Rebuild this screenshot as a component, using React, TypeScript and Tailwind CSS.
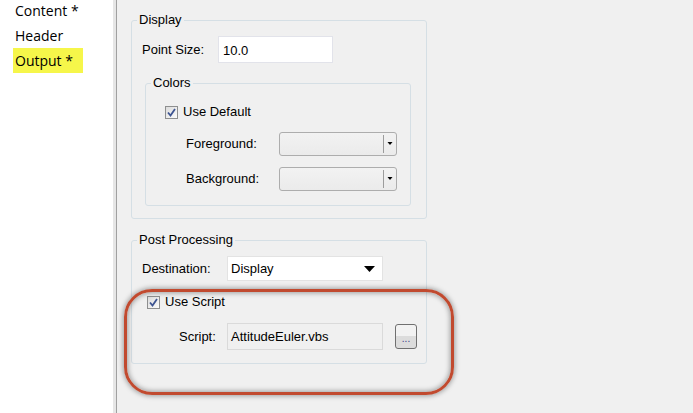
import React from 'react';

const font = { fontFamily: '"Liberation Sans", Arial, sans-serif' };

function Checkbox() {
  return (
    <span className="flex h-[13px] w-[13px] items-center justify-center border border-[#8e8f8f] bg-gradient-to-br from-[#dcdcdc] to-[#fbfbfb]">
      <svg width="9" height="9" viewBox="0 0 9 9">
        <path d="M1 4.5 L3.5 7.5 L8 1" fill="none" stroke="#3d5491" strokeWidth="1.8" />
      </svg>
    </span>
  );
}

function ColorSelect() {
  return (
    <div className="flex h-[24px] w-[118px] items-center justify-end rounded-[3px] border border-[#adadad] bg-gradient-to-b from-[#f2f2f2] to-[#ebebeb]">
      <span className="h-[18px] w-px bg-[#9c9c9c]" />
      <svg width="10" height="4" viewBox="0 0 10 4" className="mx-[1px]">
        <path d="M2.5 0 H7.5 L5 3 Z" fill="#000" />
      </svg>
    </div>
  );
}

function GroupBox({ title, className, children }: { title: string; className: string; children: React.ReactNode }) {
  return (
    <fieldset className={`rounded-[3px] border border-[#d5dfe5] ${className}`}>
      <legend className="ml-[5px] px-[2px] text-[13px] leading-[16px] text-black">{title}</legend>
      {children}
    </fieldset>
  );
}

export default function App() {
  return (
    <div className="relative flex h-[413px] w-[693px] overflow-hidden bg-[#f0f0f0] text-[13px] text-black" style={font}>
      <aside
        className="w-[116px] border-r-[3px] border-[#e6e6e6] bg-white text-[14px] leading-[25px]"
        style={{ fontFamily: '"Open Sans", "Noto Sans", sans-serif' }}
      >
        <div className="-mt-[2px] pl-[15px]">Content *</div>
        <div className="pl-[15px]">Header</div>
        <div className="ml-[13px] w-[70px] bg-[#f6f64a] pl-[2px]">Output *</div>
      </aside>

      <main className="flex-1 border-l border-[#a0a0a0] pl-[14px] pt-[12px]">
        <GroupBox title="Display" className="w-[296px] pb-[12px]">
          <div className="mt-[8px] flex items-center pl-[10px]">
            <span className="w-[76px]">Point Size:</span>
            <div className="flex h-[27px] w-[115px] items-start border border-[#e2e3ea] bg-white pl-[4px] pt-[4px]">10.0</div>
          </div>

          <GroupBox title="Colors" className="ml-[13px] mt-[12px] w-[266px] pb-[14px]">
            <div className="mt-[13px] flex h-[16px] items-center gap-[5px] pl-[19px]">
              <Checkbox />
              <span>Use Default</span>
            </div>
            <div className="mt-[12px] flex items-center pl-[40px]">
              <span className="w-[93px]">Foreground:</span>
              <ColorSelect />
            </div>
            <div className="mt-[11px] flex items-center pl-[40px]">
              <span className="w-[93px]">Background:</span>
              <ColorSelect />
            </div>
          </GroupBox>
        </GroupBox>

        <GroupBox title="Post Processing" className="mt-[13px] w-[296px] pb-[13px]">
          <div className="mt-[8px] flex items-center pl-[10px]">
            <span className="w-[85px]">Destination:</span>
            <div className="flex h-[25px] w-[156px] items-center justify-between border border-[#e3e3e3] bg-white pl-[3px] pr-[7px]">
              <span>Display</span>
              <svg width="11" height="6" viewBox="0 0 11 6">
                <path d="M0 0 H11 L5.5 6 Z" fill="#000" />
              </svg>
            </div>
          </div>
          <div className="mt-[13px] flex h-[16px] items-center gap-[5px] pl-[15px]">
            <Checkbox />
            <span>Use Script</span>
          </div>
          <div className="mt-[13px] flex items-center pl-[47px]">
            <span className="w-[48px]">Script:</span>
            <div className="flex h-[27px] w-[156px] items-start border border-[#dadada] bg-[#f0f0f0] pl-[3px] pt-[3px]">AttitudeEuler.vbs</div>
            <button className="ml-[12px] flex h-[25px] w-[22px] items-end justify-center rounded-[3px] border border-[#707070] bg-gradient-to-b from-[#f2f2f2] from-50% to-[#dcdcdc] to-50% pb-[4px] text-[10px] leading-[10px] text-[#3d3d8a]">
              ...
            </button>
          </div>
        </GroupBox>
      </main>

      <div className="pointer-events-none absolute left-[124px] top-[289px] h-[106px] w-[330px] rounded-[28px] border-[3px] border-[#c14a2f] shadow-[0_0_5px_1px_rgba(0,0,0,0.35),inset_0_0_5px_1px_rgba(0,0,0,0.35)]" />
    </div>
  );
}
